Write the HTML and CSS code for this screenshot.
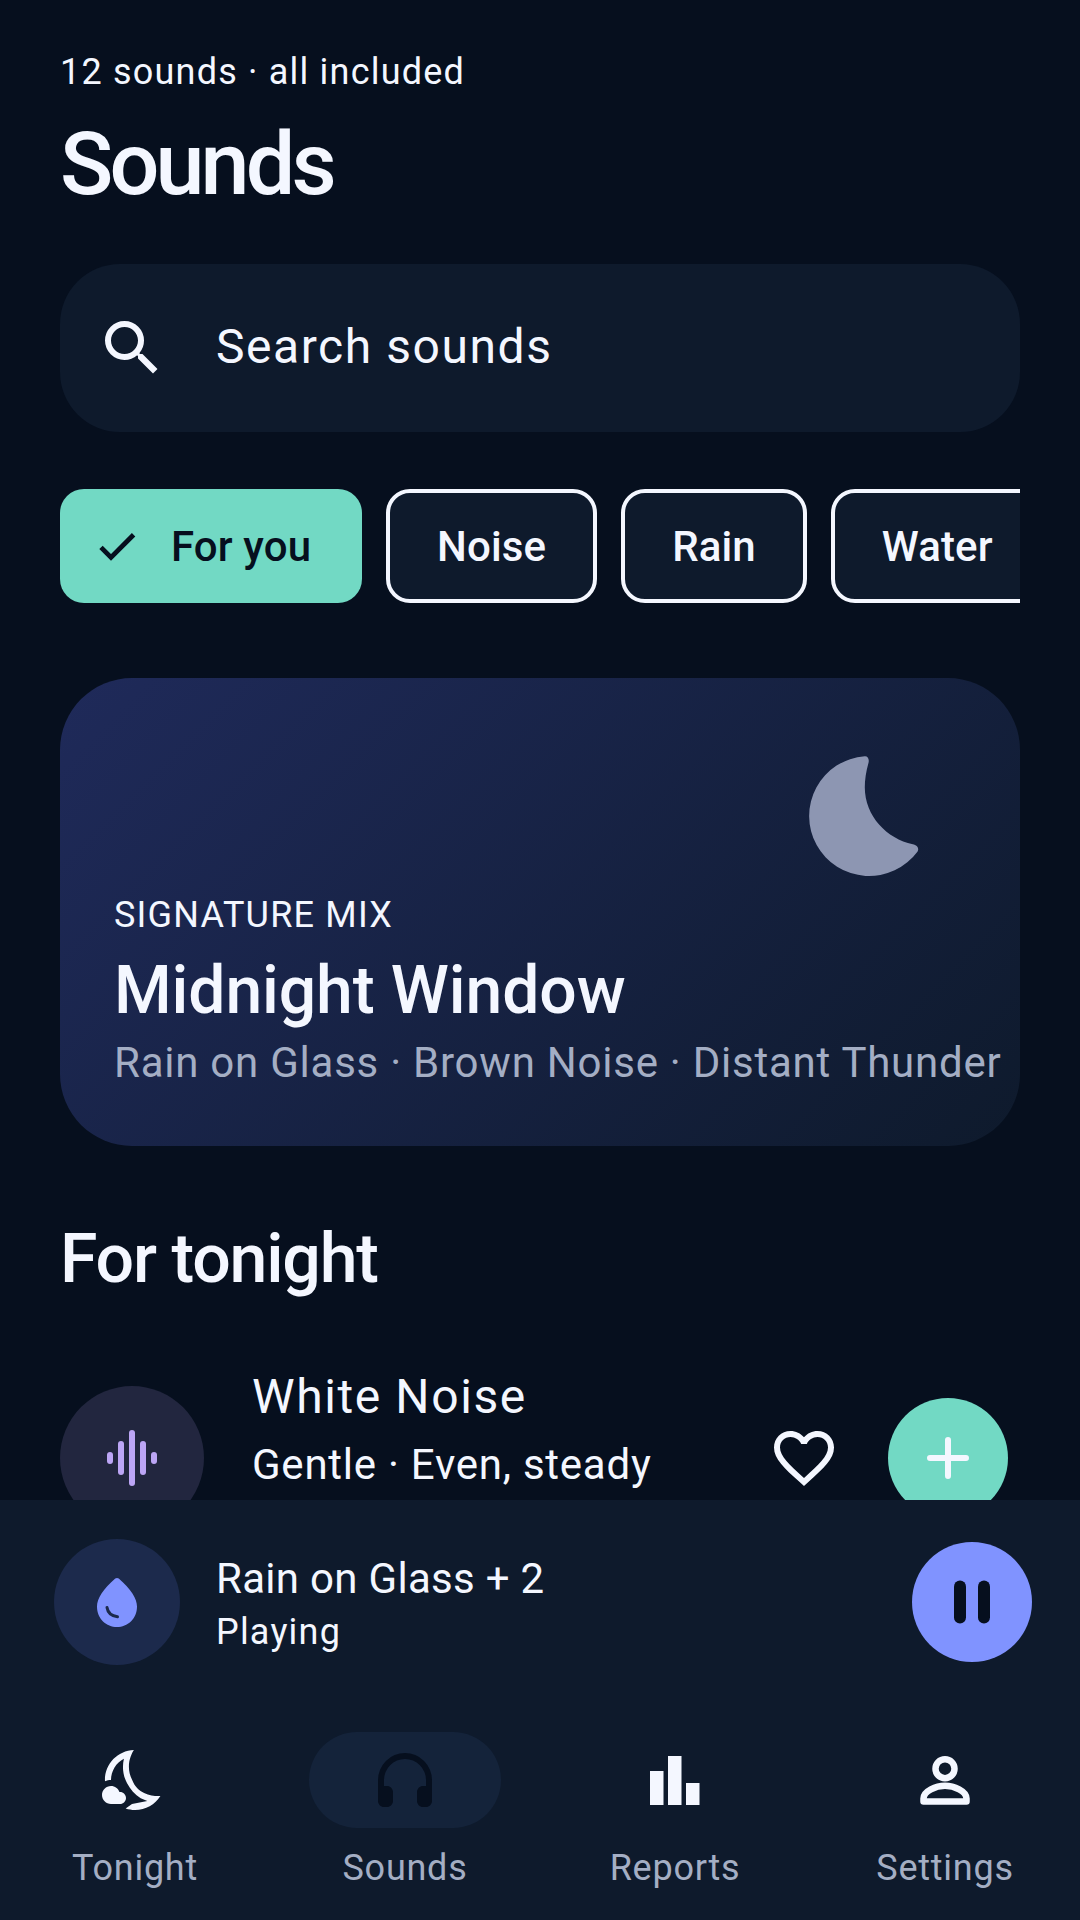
FILE: index.html
```html
<!DOCTYPE html>
<html lang="en">
<head>
    <meta charset="UTF-8">
    <title>Sounds</title>
    <link rel="stylesheet" href="styles.css">
</head>
<body>
<div class="screen">
    <main class="content">
        <p class="eyebrow">12 sounds · all included</p>
        <h1 class="title">Sounds</h1>

        <div class="search">
            <svg class="icon" viewBox="0 0 24 24"><path class="fill-light" d="M15.5 14h-.79l-.28-.27A6.471 6.471 0 0 0 16 9.5 6.5 6.5 0 1 0 9.5 16c1.61 0 3.09-.59 4.23-1.57l.27.28v.79l5 4.99L20.49 19l-4.99-5zm-6 0C7.01 14 5 11.99 5 9.5S7.01 5 9.5 5 14 7.01 14 9.5 11.99 14 9.5 14z"/></svg>
            <span class="search-text">Search sounds</span>
        </div>

        <div class="chips">
            <div class="chip chip-active">
                <svg class="chip-check" viewBox="0 0 24 24"><path class="check-line" d="M4 12.7l5 5L20.3 6.4"/></svg>
                <span>For you</span>
            </div>
            <div class="chip">Noise</div>
            <div class="chip">Rain</div>
            <div class="chip">Water</div>
        </div>

        <section class="hero">
            <svg class="hero-moon" viewBox="0 0 24 24"><path d="M11.3 2.03A10 10 0 1 0 20.1 17.9C20.4 17.4 20 16.8 19.3 16.7C15 15.8 11.3 12 11.3 7.2C11.3 6 11.5 4.6 11.9 3.2C12.1 2.5 11.8 2 11.3 2.03Z"/></svg>
            <p class="hero-label">SIGNATURE MIX</p>
            <h2 class="hero-title">Midnight Window</h2>
            <p class="hero-sub">Rain on Glass · Brown Noise · Distant Thunder</p>
        </section>

        <h2 class="section-title">For tonight</h2>

        <div class="sound-row">
            <div class="sound-icon">
                <svg class="icon" viewBox="0 0 72 72">
                    <rect class="wave" x="11" y="30" width="6" height="12" rx="3"/>
                    <rect class="wave" x="22" y="19" width="6" height="34" rx="3"/>
                    <rect class="wave" x="33" y="8" width="6" height="56" rx="3"/>
                    <rect class="wave" x="44" y="19" width="6" height="34" rx="3"/>
                    <rect class="wave" x="55" y="30" width="6" height="12" rx="3"/>
                </svg>
            </div>
            <div class="sound-text">
                <div class="sound-name">White Noise</div>
                <div class="sound-meta">Gentle · Even, steady</div>
            </div>
            <svg class="icon" viewBox="0 0 24 24"><path class="fill-light" d="M16.5 3c-1.74 0-3.41.81-4.5 2.09C10.91 3.81 9.24 3 7.5 3 4.42 3 2 5.42 2 8.5c0 3.78 3.4 6.86 8.55 11.54L12 21.35l1.45-1.32C18.6 15.36 22 12.28 22 8.5 22 5.42 19.58 3 16.5 3zm-4.4 15.55l-.1.1-.1-.1C7.14 14.24 4 11.39 4 8.5 4 6.5 5.5 5 7.5 5c1.54 0 3.04.99 3.57 2.36h1.87C13.46 5.99 14.96 5 16.5 5c2 0 3.5 1.5 3.5 3.5 0 2.89-3.14 5.74-7.9 10.05z"/></svg>
            <div class="add-btn">
                <svg class="icon" viewBox="0 0 72 72"><path class="plus" d="M36 18v36M18 36h36"/></svg>
            </div>
        </div>
    </main>

    <footer class="bottom">
        <div class="player">
            <div class="player-icon">
                <svg class="drop" viewBox="0 0 24 24">
                    <path class="drop-body" d="M11.3 2.6C6.4 6.9 4 10.6 4 13.8 4 18.8 7.8 22 12 22s8-3.2 8-8.2c0-3.2-2.4-6.9-7.3-11.2-.4-.3-1-.3-1.4 0z"/>
                    <path class="drop-line" d="M8 14.2c.3 2 1.9 3.4 4.2 3.7"/>
                </svg>
            </div>
            <div class="player-text">
                <div class="player-name">Rain on Glass + 2</div>
                <div class="player-state">Playing</div>
            </div>
            <div class="pause-btn">
                <svg class="icon" viewBox="0 0 72 72">
                    <rect class="fill-dark" x="18" y="14.5" width="12" height="43" rx="6"/>
                    <rect class="fill-dark" x="42" y="14.5" width="12" height="43" rx="6"/>
                </svg>
            </div>
        </div>

        <nav class="nav">
            <div class="nav-item">
                <div class="nav-icon">
                    <svg class="icon" viewBox="0 0 24 24">
                        <path class="fill-light" d="M11.63 2.01C6.27 2.2 1.98 6.59 1.98 12c0 .14.02.28.02.42C2.6 12.15 3.3 12 4 12 4 9 5.7 6.2 8.3 4.9 7.8 7.1 7.74 9.94 9.32 13c1.08 2.1 2.68 3.9 4.58 5.1l2.2.9-5.1 1-2.12 1.51c.98.32 2.03.5 3.11.5 3.58 0 6.7-1.88 8.48-4.68-2.5.17-7.55-.5-9.37-5.25C8.77 7.57 10.6 3.6 11.63 2.01z"/>
                        <path class="fill-light" d="M7 16h-.18C6.4 14.84 5.3 14 4 14c-1.66 0-3 1.34-3 3s1.34 3 3 3h3c1.1 0 2-.9 2-2s-.9-2-2-2z"/>
                    </svg>
                </div>
                <span class="nav-label">Tonight</span>
            </div>
            <div class="nav-item">
                <div class="nav-icon nav-icon-active">
                    <svg class="icon" viewBox="0 0 24 24"><path class="fill-dark" d="M12 3a9 9 0 0 0-9 9v7c0 1.1.9 2 2 2h1c1.1 0 2-.9 2-2v-3c0-1.1-.9-2-2-2H5v-2a7 7 0 0 1 14 0v2h-1c-1.1 0-2 .9-2 2v3c0 1.1.9 2 2 2h1c1.1 0 2-.9 2-2v-7a9 9 0 0 0-9-9z"/></svg>
                </div>
                <span class="nav-label">Sounds</span>
            </div>
            <div class="nav-item">
                <div class="nav-icon">
                    <svg class="icon" viewBox="0 0 72 72">
                        <rect class="fill-light" x="11" y="27" width="13.5" height="34"/>
                        <rect class="fill-light" x="29" y="12" width="13.5" height="49"/>
                        <rect class="fill-light" x="47" y="39" width="13.5" height="22"/>
                    </svg>
                </div>
                <span class="nav-label">Reports</span>
            </div>
            <div class="nav-item">
                <div class="nav-icon">
                    <svg class="icon" viewBox="0 0 72 72">
                        <circle class="line-light" cx="36" cy="24.7" r="9.5"/>
                        <path class="line-light" d="M14.5 57.5v-3C14.5 47 27 41.7 36 41.7S57.5 47 57.5 54.5v3Z"/>
                    </svg>
                </div>
                <span class="nav-label">Settings</span>
            </div>
        </nav>
    </footer>
</div>
</body>
</html>
```

FILE: styles.css
```css
* {
    box-sizing: border-box;
}

html, body {
    margin: 0;
    padding: 0;
}

body {
    background: #060f1e;
    color: #f4f7ff;
    font-family: Roboto, "Liberation Sans", sans-serif;
}

p, h1, h2 {
    margin: 0;
    font-weight: normal;
}

.screen {
    width: 1080px;
    height: 1920px;
    display: flex;
    flex-direction: column;
    overflow: hidden;
}

.content {
    height: 1500px;
    flex: none;
    padding: 48px 60px 0;
    overflow: hidden;
}

.icon {
    width: 72px;
    height: 72px;
    flex: none;
    display: block;
}

.fill-light {
    fill: #f4f7ff;
}

.fill-dark {
    fill: #060f1e;
}

.line-light {
    fill: none;
    stroke: #f4f7ff;
    stroke-width: 6.5;
    stroke-linejoin: round;
}

.eyebrow {
    font-size: 36px;
    line-height: 48px;
    letter-spacing: 1.2px;
}

.title {
    margin-top: 20px;
    font-size: 88px;
    line-height: 96px;
    font-weight: 500;
    letter-spacing: -3.85px;
}

.search {
    margin-top: 52px;
    height: 168px;
    padding-left: 36px;
    display: flex;
    align-items: center;
    gap: 48px;
    background: #0e1a2c;
    border-radius: 60px;
}

.search-text {
    padding-bottom: 4px;
    font-size: 48px;
    letter-spacing: 1.55px;
}

.chips {
    margin-top: 57px;
    display: flex;
    gap: 24px;
    overflow: hidden;
}

.chip {
    flex: none;
    height: 114px;
    padding: 0 47px;
    display: flex;
    align-items: center;
    background: #0e1a2c;
    border: 4px solid #f4f7ff;
    border-radius: 24px;
    font-size: 42px;
    font-weight: 500;
    letter-spacing: 0.12px;
}

.chip-active {
    padding: 0 51px 0 33px;
    gap: 30px;
    background: #72d9c4;
    border: 0;
    color: #060f1e;
}

.chip-check {
    width: 48px;
    height: 48px;
}

.check-line {
    fill: none;
    stroke: #060f1e;
    stroke-width: 2.4;
}

.hero {
    position: relative;
    margin-top: 75px;
    height: 468px;
    padding: 0 54px 53px;
    display: flex;
    flex-direction: column;
    justify-content: flex-end;
    background: linear-gradient(135deg, #1f2a5a, #0e1a2c);
    border-radius: 72px;
}

.hero-moon {
    position: absolute;
    top: 66px;
    right: 79px;
    width: 144px;
    height: 144px;
    fill: #8d96b2;
}

.hero-label {
    font-size: 36px;
    line-height: 48px;
    letter-spacing: 1.2px;
}

.hero-title {
    margin-top: 10px;
    font-size: 66px;
    line-height: 84px;
    font-weight: 500;
    letter-spacing: -0.1px;
}

.hero-sub {
    font-size: 42px;
    line-height: 60px;
    letter-spacing: 0.76px;
    color: #a4aec4;
    white-space: nowrap;
}

.section-title {
    margin-top: 71px;
    font-size: 68px;
    line-height: 84px;
    font-weight: 500;
    letter-spacing: -1.2px;
}

.sound-row {
    margin-top: 71px;
    height: 172px;
    padding-right: 12px;
    display: flex;
    align-items: center;
    gap: 48px;
}

.sound-icon {
    width: 144px;
    height: 144px;
    flex: none;
    display: flex;
    align-items: center;
    justify-content: center;
    background: #22263f;
    border-radius: 50%;
}

.wave {
    fill: #bca5f5;
}

.sound-text {
    flex: 1;
    align-self: flex-start;
    padding-top: 1px;
}

.sound-name {
    font-size: 48px;
    line-height: 48px;
    letter-spacing: 1.6px;
}

.sound-meta {
    margin-top: 20px;
    font-size: 42px;
    line-height: 48px;
    letter-spacing: 0.75px;
}

.add-btn {
    width: 120px;
    height: 120px;
    flex: none;
    display: flex;
    align-items: center;
    justify-content: center;
    background: #72d9c4;
    border-radius: 50%;
}

.plus {
    fill: none;
    stroke: #f4f7ff;
    stroke-width: 6;
    stroke-linecap: round;
}

.bottom {
    flex: 1;
    background: #0e1a2c;
}

.player {
    padding: 39px 48px 0 54px;
    display: flex;
    align-items: center;
    gap: 36px;
}

.player-icon {
    width: 126px;
    height: 126px;
    flex: none;
    display: flex;
    align-items: center;
    justify-content: center;
    background: #1c2a4c;
    border-radius: 50%;
}

.drop {
    width: 60px;
    height: 60px;
}

.drop-body {
    fill: #8093ff;
}

.drop-line {
    fill: none;
    stroke: #1c2a4c;
    stroke-width: 1.2;
    stroke-linecap: round;
}

.player-text {
    flex: 1;
    padding-top: 4px;
}

.player-name {
    font-size: 42px;
    line-height: 54px;
    letter-spacing: 0.3px;
}

.player-state {
    margin-top: 2px;
    font-size: 36px;
    line-height: 48px;
    letter-spacing: 1.2px;
}

.pause-btn {
    width: 120px;
    height: 120px;
    flex: none;
    display: flex;
    align-items: center;
    justify-content: center;
    background: #8093ff;
    border-radius: 50%;
}

.nav {
    margin-top: 67px;
    display: grid;
    grid-template-columns: repeat(4, 1fr);
}

.nav-item {
    display: flex;
    flex-direction: column;
    align-items: center;
}

.nav-icon {
    width: 192px;
    height: 96px;
    display: flex;
    align-items: center;
    justify-content: center;
    border-radius: 48px;
}

.nav-icon-active {
    background: #14233a;
}

.nav-label {
    margin-top: 16px;
    font-size: 36px;
    line-height: 48px;
    letter-spacing: 0.75px;
    color: #a4aec4;
}
```
